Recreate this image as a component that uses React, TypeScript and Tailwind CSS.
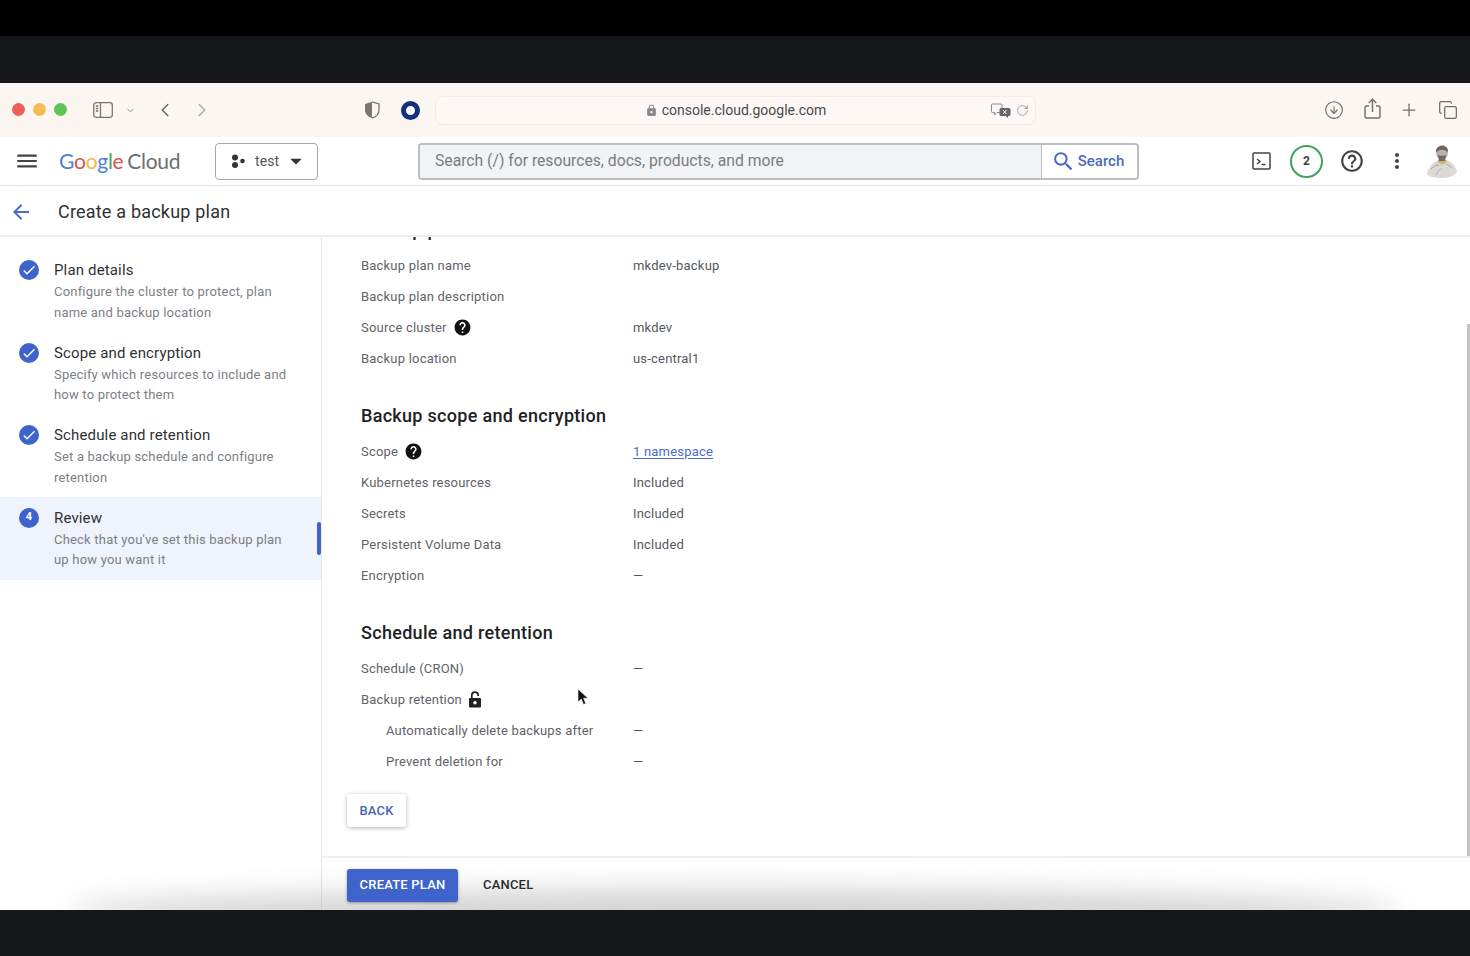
import { ChevronDown, ChevronLeft, ChevronRight, CircleArrowDown, Copy, Plus, RotateCw } from 'lucide-react'
import {
  MdArrowBack,
  MdArrowDropDown,
  MdCheck,
  MdHelp,
  MdHelpOutline,
  MdLock,
  MdMenu,
  MdMoreVert,
  MdSearch,
} from 'react-icons/md'

const steps = [
  { title: 'Plan details', lines: ['Configure the cluster to protect, plan', 'name and backup location'], done: true },
  { title: 'Scope and encryption', lines: ['Specify which resources to include and', 'how to protect them'], done: true },
  { title: 'Schedule and retention', lines: ['Set a backup schedule and configure', 'retention'], done: true },
  { title: 'Review', lines: ["Check that you've set this backup plan", 'up how you want it'], done: false },
]

function Row({ label, value, help, lock, sub, link }: {
  label: string
  value?: string
  help?: boolean
  lock?: boolean
  sub?: boolean
  link?: boolean
}) {
  return (
    <div className="flex h-[31px] items-center text-[13px] tracking-[0.2px] text-[#5f6368]">
      <div className={sub ? 'flex w-[272px] items-center pl-[25px]' : 'flex w-[272px] items-center'}>
        <span>{label}</span>
        {help && <MdHelp className="ml-[6px] text-[19px] text-[#111]" />}
        {lock && (
          <svg className="ml-[6px]" width="14" height="17" viewBox="0 0 14 17">
            <path d="M3.800 7.500V4.300a3.200 3.200 0 0 1 6.400 0V5" fill="none" stroke="#222" strokeWidth="1.700" />
            <rect x="1" y="7" width="12" height="9.500" rx="1" fill="#222" />
            <circle cx="7" cy="11.700" r="1.700" fill="#fff" />
          </svg>
        )}
      </div>
      {link ? (
        <span className="text-[#4a6bc9] underline underline-offset-2">{value}</span>
      ) : (
        <span className="text-[#55595e]">{value}</span>
      )}
    </div>
  )
}

function BrowserBar() {
  return (
    <div className="flex h-[54px] items-center bg-[#fcf6f2] text-[#6b6b6b]">
      <div className="ml-[12px] flex gap-[8px] pb-[1px]">
        <div className="h-[13px] w-[13px] rounded-full bg-[#ec5f57]" />
        <div className="h-[13px] w-[13px] rounded-full bg-[#f5bd4f]" />
        <div className="h-[13px] w-[13px] rounded-full bg-[#5fc454]" />
      </div>
      <svg className="ml-[26px] mb-[1px]" width="20" height="16" viewBox="0 0 20 16" fill="none" stroke="#777" strokeWidth="1.3">
        <rect x="0.7" y="0.7" width="18.6" height="14.6" rx="2.5" />
        <path d="M7.5 1v14" />
        <path d="M2.800 4h2.500M2.800 6.500h2.500M2.800 9h2.500" />
      </svg>
      <ChevronDown className="ml-[12px]" size={11} strokeWidth={2} color="#888" />
      <ChevronLeft className="ml-[18px] mb-[1px]" size={22} strokeWidth={1.6} color="#666" />
      <ChevronRight className="ml-[15px] mb-[1px]" size={22} strokeWidth={1.6} color="#aaa" />
      <svg className="ml-[151px] mb-[1px]" width="16" height="18" viewBox="0 0 16 18">
        <path d="M8 .8 1 3v6c0 4 3 6.800 7 8.200V.8Z" fill="#777" />
        <path d="M8 .8 15 3v6c0 4-3 6.800-7 8.200" fill="none" stroke="#777" strokeWidth="1.300" />
      </svg>
      <div className="ml-[21px] h-[19px] w-[19px] rounded-full border-[5px] border-[#12307c] bg-white" />
      <div className="relative ml-[15px] flex h-[29px] w-[601px] items-center justify-center rounded-[8px] border border-[#f1ebe5] bg-[#fdf8f5]">
        <MdLock className="text-[13px] text-[#888]" />
        <span className="ml-[4px] text-[14px] text-[#4a4a4a]">console.cloud.google.com</span>
        <div className="absolute right-[6px] flex items-center gap-[5px]">
          <svg width="20" height="15" viewBox="0 0 20 15">
            <path d="M1.500 1h8.500a1 1 0 0 1 1 1v6.500a1 1 0 0 1-1 1H6l-2.500 2.500V9.500h-2a1 1 0 0 1-1-1V2a1 1 0 0 1 1-1Z" fill="#fcf6f2" stroke="#8a8a8a" />
            <path d="M10 5h8a1.500 1.500 0 0 1 1.500 1.500v5A1.500 1.500 0 0 1 18 13h-1v2l-2.500-2H10a1.500 1.500 0 0 1-1.500-1.500v-5A1.500 1.500 0 0 1 10 5Z" fill="#666" />
            <path d="M12 7l3.500 4M15.500 7 12 11" stroke="#fff" strokeWidth="1" />
          </svg>
          <RotateCw size={13} strokeWidth={1.400} color="#888" />
        </div>
      </div>
      <CircleArrowDown className="ml-[288px] mb-[1px]" size={20} strokeWidth={1.300} color="#666" />
      <svg className="ml-[20px] mb-[3px]" width="17" height="22" viewBox="0 0 17 22" fill="none" stroke="#6e6e6e" strokeWidth="1.400">
        <path d="M5 8H2.500A1.500 1.500 0 0 0 1 9.500v9A1.500 1.500 0 0 0 2.500 20h12a1.500 1.500 0 0 0 1.500-1.500v-9A1.500 1.500 0 0 0 14.500 8H12" />
        <path d="M8.500 14V1.500M4.800 5l3.700-3.700L12.200 5" />
      </svg>
      <Plus className="ml-[18px] mb-[1px]" size={20} strokeWidth={1.500} color="#6e6e6e" />
      <Copy className="ml-[19px] mb-[1px]" size={20} strokeWidth={1.500} color="#6e6e6e" />
    </div>
  )
}

function ConsoleHeader() {
  return (
    <div className="flex h-[49px] items-center border-b border-[#e3e3e3] bg-white">
      <MdMenu className="ml-[14px] text-[26px] text-[#444]" />
      <div className="ml-[19px] flex w-[156px] items-center font-['Lato',sans-serif] text-[21px] tracking-[-0.3px]">
        <span className="text-[#4d7fdc]">G</span>
        <span className="text-[#d9534a]">o</span>
        <span className="text-[#eebb3d]">o</span>
        <span className="text-[#4d7fdc]">g</span>
        <span className="text-[#4ea65d]">l</span>
        <span className="text-[#d9534a]">e</span>
        <span className="ml-[4px] text-[#6b6f73]">Cloud</span>
      </div>
      <div className="flex h-[37px] w-[103px] items-center rounded-[4px] border border-[#a4a8ac] pl-[15px]">
        <svg width="15" height="14" viewBox="0 0 15 14" fill="#333">
          <circle cx="4" cy="3.500" r="3" />
          <circle cx="11.500" cy="7" r="2.300" />
          <circle cx="4" cy="11" r="3" />
        </svg>
        <span className="ml-[9px] text-[14px] tracking-[0.1px] text-[#555]">test</span>
        <MdArrowDropDown className="ml-[3px] text-[28px] text-[#333]" />
      </div>
      <div className="ml-[100px] flex h-[37px] w-[721px] overflow-hidden rounded-[4px] border-2 border-[#bcbec0]">
        <div className="flex flex-1 items-center border-r border-[#bcbec0] bg-[#f1f3f4] pl-[15px] text-[15.700px] text-[#7a7d81]">
          Search (/) for resources, docs, products, and more
        </div>
        <div className="flex w-[95px] items-center justify-center bg-white pr-[4px] text-[15px] font-medium text-[#4a6bc0]">
          <MdSearch className="mr-[2px] text-[25px]" />
          Search
        </div>
      </div>
      <svg className="ml-[113px]" width="19" height="18" viewBox="0 0 19 18" fill="none" stroke="#444" strokeWidth="1.500">
        <rect x="1" y="1" width="17" height="16" rx="1" />
        <path d="M5 7l3 2.500L5 12M9.500 12.500h4" />
      </svg>
      <div className="ml-[19px] flex h-[33px] w-[33px] items-center justify-center rounded-full border-2 border-[#3fa35c] text-[12px] font-bold text-[#3c4043]">
        2
      </div>
      <MdHelpOutline className="ml-[16px] text-[26px] text-[#444]" />
      <MdMoreVert className="ml-[20px] text-[24px] text-[#444]" />
      <svg className="ml-[16px]" width="34" height="34" viewBox="0 0 34 34">
        <path d="M2 30c1-7 6-12 11-13l8-1c5 1 10 6 11 12-2 3-7 6-15 6S4 33 2 30Z" fill="#dcdad7" />
        <path d="M6 25c3-3 5-4 8-4M27 24c-2-2-4-3-6-4M11 31c2-4 4-6 6-6" fill="none" stroke="#aaa69f" strokeWidth="1" />
        <path d="M12 18l5 3 5-3-1-2h-8Z" fill="#d8b27c" />
        <ellipse cx="17" cy="8.500" rx="6" ry="7.500" fill="#b9b1aa" />
        <path d="M11 7c0-6 12-7 12 0l-1 1c-2-3-8-3-10 0Z" fill="#6a6560" />
        <path d="M13 11c1 1 7 1 8 0l-1 6h-6Z" fill="#6f6a65" />
      </svg>
    </div>
  )
}

function Sidebar() {
  return (
    <div className="w-[322px] shrink-0 border-r border-[#e6e6e6] bg-white pt-[12px]">
      {steps.map((step, i) => (
        <div key={step.title} className={step.done ? 'relative flex h-[82.5px] bg-white' : 'relative flex h-[83px] bg-[#eff3fc]'}>
          <div className="ml-[19px] mt-[11px] flex h-[20px] w-[20px] items-center justify-center rounded-full bg-[#3e64cc] text-[11px] font-bold text-white">
            {step.done ? <MdCheck className="text-[16px]" /> : i + 1}
          </div>
          <div className="ml-[15px] pt-[11px]">
            <div className="text-[15px] leading-[20px] tracking-[0.15px] text-[#303134]">{step.title}</div>
            <div className="mt-[2px] text-[13px] leading-[20.500px] tracking-[0.2px] text-[#7c8085]">
              {step.lines.map((line) => (
                <div key={line}>{line}</div>
              ))}
            </div>
          </div>
          {!step.done && <div className="absolute right-0 top-[25px] h-[33px] w-[4px] rounded-[2px] bg-[#3e64cc]" />}
        </div>
      ))}
    </div>
  )
}

function Review() {
  return (
    <div className="relative flex min-w-0 flex-1 flex-col">
      <div className="relative flex-1 overflow-hidden">
        <div className="-mt-[20px] pl-[39px]">
          <h2 className="mb-[7px] h-[26px] text-[18px] font-medium leading-[26px] tracking-[0.3px] text-[#202124]">Backup plan details</h2>
          <Row label="Backup plan name" value="mkdev-backup" />
          <Row label="Backup plan description" />
          <Row label="Source cluster" value="mkdev" help />
          <Row label="Backup location" value="us-central1" />

          <h2 className="mb-[7px] mt-[29px] h-[26px] text-[18px] font-medium leading-[26px] tracking-[0.3px] text-[#202124]">Backup scope and encryption</h2>
          <Row label="Scope" value="1 namespace" help link />
          <Row label="Kubernetes resources" value="Included" />
          <Row label="Secrets" value="Included" />
          <Row label="Persistent Volume Data" value="Included" />
          <Row label="Encryption" value="—" />

          <h2 className="mb-[7px] mt-[29px] h-[26px] text-[18px] font-medium leading-[26px] tracking-[0.3px] text-[#202124]">Schedule and retention</h2>
          <Row label="Schedule (CRON)" value="—" />
          <Row label="Backup retention" lock />
          <Row label="Automatically delete backups after" value="—" sub />
          <Row label="Prevent deletion for" value="—" sub />
        </div>
        <button className="ml-[25px] mt-[17px] h-[33px] w-[59px] rounded-[3px] bg-white text-[13px] font-medium tracking-[0.2px] text-[#4a63b8] shadow-[0_1px_4px_rgba(0,0,0,0.3)]">
          BACK
        </button>
        <div className="absolute bottom-0 right-0 top-[87px] w-[3px] bg-[#c4c4c4]" />
        <svg className="absolute left-[255px] top-[451px]" width="13" height="19" viewBox="0 0 13 19">
          <path d="M1 1v13l3.300-3 2.200 5.500 2.300-1-2.200-5.200H11Z" fill="#111" stroke="#fff" strokeWidth="0.600" />
        </svg>
      </div>
      <div className="flex h-[54px] items-center border-t-2 border-[#eeeeee] bg-white pl-[25px] pt-[2px]">
        <button className="relative z-10 h-[33px] w-[111px] rounded-[3px] bg-[#3e64cc] text-[13px] font-medium tracking-[0.2px] text-white shadow-[0_1px_3px_rgba(0,0,0,0.35)]">
          CREATE PLAN
        </button>
        <button className="relative z-10 ml-[25px] text-[13px] font-medium tracking-[0.2px] text-[#2a2a2a]">CANCEL</button>
      </div>
    </div>
  )
}

export default function App() {
  return (
    <div className="flex h-[956px] w-[1470px] flex-col overflow-hidden bg-black font-['Roboto',sans-serif]">
      <div className="h-[36px] shrink-0 bg-black" />
      <div className="h-[47px] shrink-0 bg-[#16171a]" />
      <BrowserBar />
      <ConsoleHeader />
      <div className="flex h-[51px] shrink-0 items-center border-b-2 border-[#eeeeee] bg-white pt-[2px]">
        <MdArrowBack className="ml-[9px] text-[24px] text-[#4a6bc9]" />
        <span className="ml-[25px] text-[18px] tracking-[0.2px] text-[#303134]">Create a backup plan</span>
      </div>
      <div className="relative flex h-[673px] shrink-0 bg-white">
        <Sidebar />
        <Review />
        <div className="pointer-events-none absolute bottom-[-24px] left-[70px] right-[70px] h-[44px] rounded-[50%] bg-[#9a9a9a] opacity-45 blur-[14px]" />
      </div>
      <div className="relative z-20 flex-1 bg-[#16171a]" />
    </div>
  )
}
